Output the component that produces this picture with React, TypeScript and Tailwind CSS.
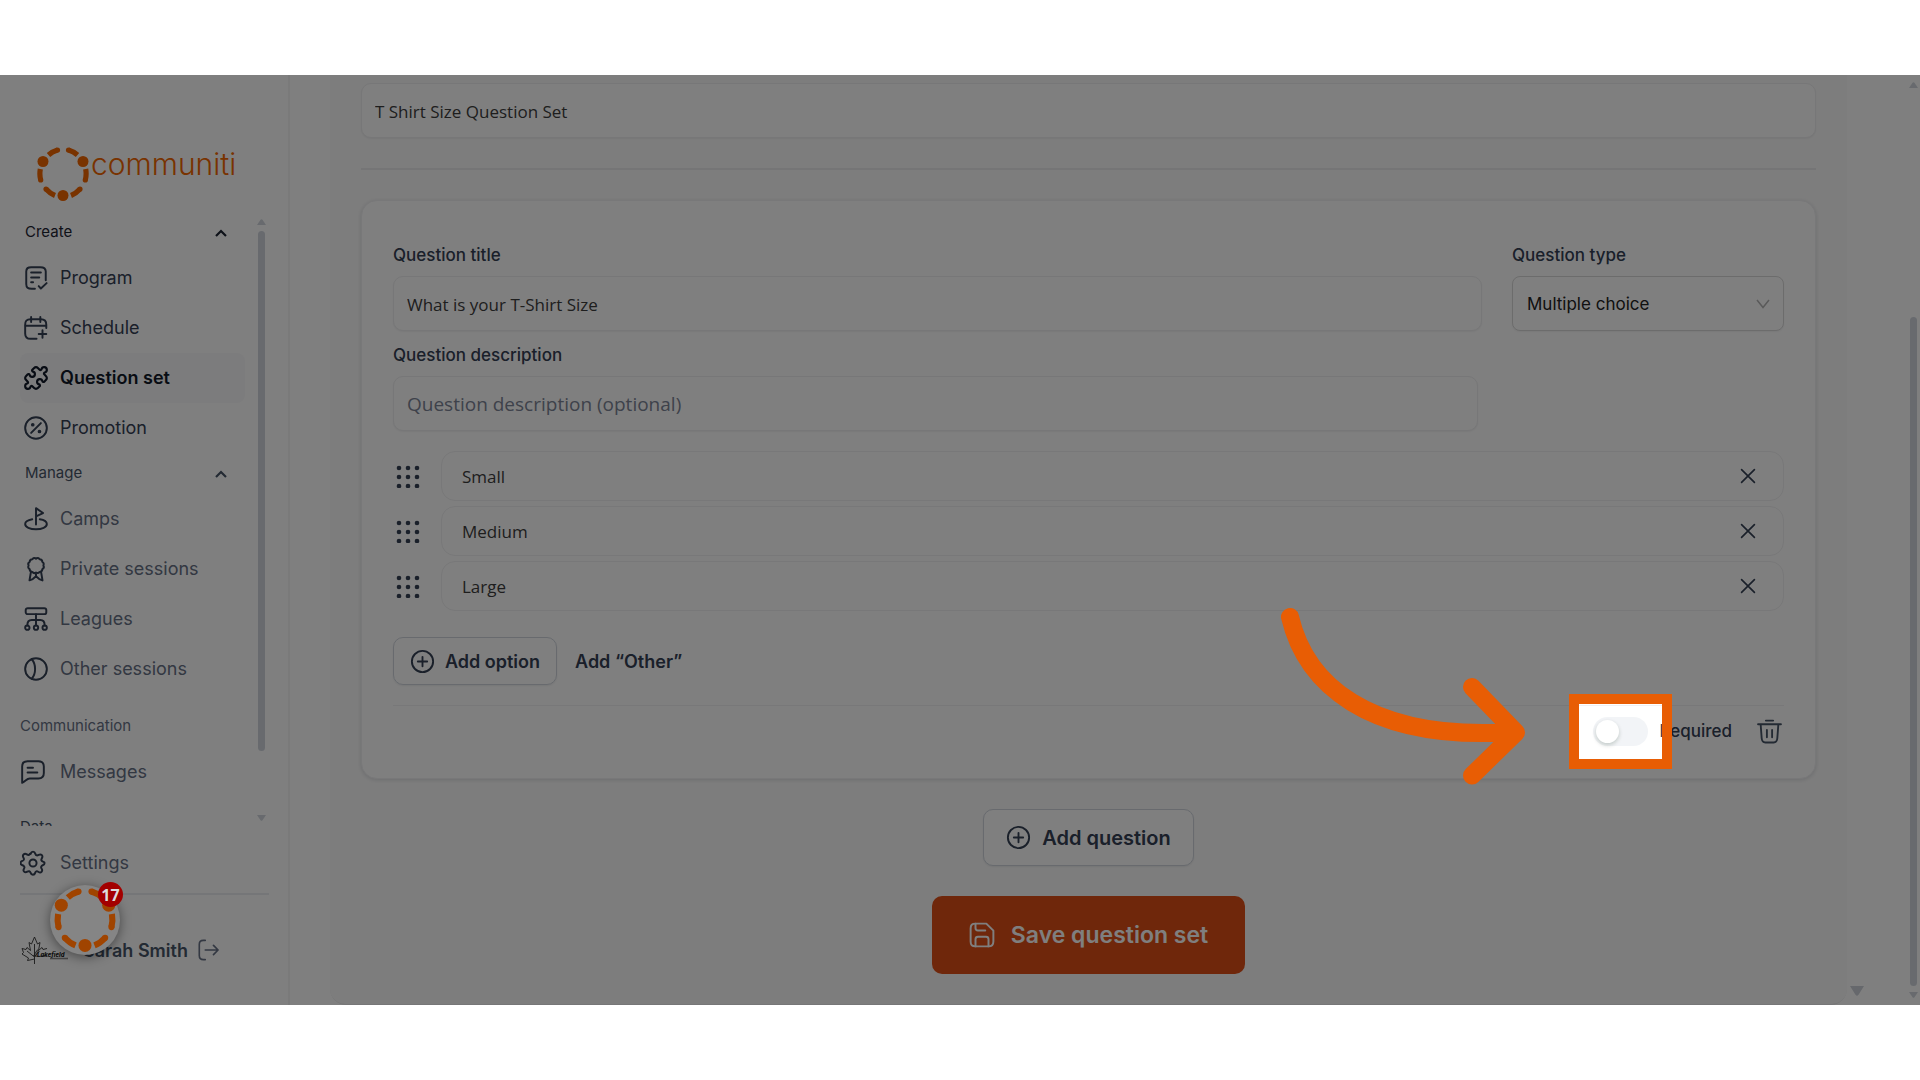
import { useState } from 'react';
import type { ReactNode } from 'react';
import { Puzzle } from 'lucide-react';

const iconProps = {
  fill: 'none',
  stroke: 'currentColor',
  strokeWidth: 1.8,
  strokeLinecap: 'round' as const,
  strokeLinejoin: 'round' as const,
  viewBox: '0 0 24 24',
};

function Icon({ children, className = 'size-[26px]' }: { children: ReactNode; className?: string }) {
  return (
    <svg {...iconProps} className={`shrink-0 ${className}`} aria-hidden="true">
      {children}
    </svg>
  );
}

const icons: Record<string, ReactNode> = {
  program: (
    <>
      <path d="M11 22H8c-3.500 0-5-1-5-4.500V6c0-3 1.500-4 4.500-4H16c3.500 0 5 1 5 4v8" />
      <path d="M7.500 7h9M7.500 11.500h7.500M7.500 16h1.800M14.500 19.500l2 2.200 5.300-5" />
    </>
  ),
  schedule: (
    <>
      <path d="M21.500 12V9c0-3.500-1.200-5-5-5H7C3.200 4 2 5.500 2 9v8c0 3.500 1.200 5 5 5h5.500" />
      <path d="M7.500 1.800v4.700M16 1.800v4.700M2.500 10h18.500M18 14v7M14.500 17.500h7" />
    </>
  ),
  promotion: (
    <>
      <circle cx="12" cy="12" r="10" />
      <path d="M7.500 16.500l9-9" />
      <circle cx="9" cy="9" r=".8" />
      <circle cx="15.200" cy="15.200" r=".8" />
    </>
  ),
  camps: (
    <>
      <path d="M12 17V2l6.500 4.500L12 9.500" />
      <path d="M8.500 12.300C4.700 13 2 14.600 2 16.700 2 19.600 6.500 21.500 12 21.500s10-1.900 10-4.800c0-2.100-2.700-3.800-6.500-4.400" />
    </>
  ),
  sessions: (
    <>
      <path d="M12 2.500c1.200-.9 2.500-.8 3.300.5 1.500 0 2.500.8 2.500 2.400 1.300.7 1.700 2 1 3.300.8 1.300.4 2.600-.9 3.400 0 1.600-1 2.500-2.500 2.600-.9 1.200-2.200 1.400-3.400.5-1.200.9-2.500.7-3.400-.5-1.500-.1-2.500-1-2.500-2.600-1.300-.8-1.700-2.100-.9-3.400-.7-1.300-.3-2.600 1-3.300 0-1.600 1-2.400 2.500-2.400.8-1.300 2.100-1.400 3.300-.5z" />
      <path d="M7.300 14.800L6 22.500l3-1.200 3-2.600 3 2.600 3 1.200-1.300-7.700M12 18.500v-2" />
    </>
  ),
  leagues: (
    <>
      <rect x="2.500" y="2" width="19" height="5.500" rx="1.800" />
      <circle cx="4" cy="20" r="2" />
      <circle cx="12" cy="20" r="2" />
      <circle cx="20" cy="20" r="2" />
      <path d="M12 7.500V18M4 18c0-3.500 1-5 4-5h8c3 0 4 1.500 4 5" />
    </>
  ),
  other: (
    <>
      <circle cx="12" cy="12" r="10" />
      <path d="M8 3c4.200 4.500 4.200 13.500 0 18" />
    </>
  ),
  messages: (
    <>
      <path d="M2 22V7c0-3.500 1.300-5 5-5h10c3.500 0 5 1.500 5 5v6c0 3.500-1.500 5-5 5H9c-3 0-4 3-7 4z" />
      <path d="M7 8h5M7 12.500h9" />
    </>
  ),
  settings: (
    <>
      <circle cx="12" cy="12" r="3.300" />
      <path d="M9.800 3.600C10.300 2 10.800 1.500 12 1.500s1.700.5 2.200 2.100 1.600 1.700 3 .9 2.200-.6 3 .3.700 1.700-.1 3-.4 2.400 1 2.900S22.700 11 22.700 12.100s-.4 1.600-1.700 2-2 1.700-1.100 3 .8 2.100 0 3-1.800.8-3.100 0-2.400-.4-2.800 1-.9 1.700-2.100 1.700-1.700-.4-2.200-1.900-1.600-1.700-2.900-.9-2.100.9-3 0-.9-1.600 0-3-.3-2.500-1.600-2.900-1.700-.9-1.700-2 .4-1.600 1.700-2 1.900-1.600 1-3-.8-2.100.1-3 1.700-.9 3-.1 2.300.8 2.800-.5z" />
    </>
  ),
  plus: (
    <>
      <circle cx="12" cy="12" r="10.200" />
      <path d="M12 7.500v9M7.500 12h9" />
    </>
  ),
  close: <path d="M5 5l14 14M19 5L5 19" />,
  trash: (
    <path d="M1 5h22M8.500 1.500h7M3.500 5l1 13.500c.2 3 1 4 3.500 4h8c2.500 0 3.300-1 3.500-4l1-13.500M9.500 10.500v7M14.500 10.500v7" />
  ),
  save: (
    <>
      <path d="M1.500 6c0-3.300 1.200-4.500 4.500-4.500h10L22.500 8v10c0 3.300-1.200 4.500-4.500 4.500H6c-3.300 0-4.500-1.200-4.500-4.500z" />
      <path d="M6 1.500V5.500c0 1.500.8 2.300 2.300 2.300H15M6 22.500V16c0-1.500.8-2.300 2.300-2.300h7.400c1.500 0 2.300.8 2.300 2.300v6.500" />
    </>
  ),
  logout: <path d="M9 1.500H7C3.700 1.500 2.500 2.700 2.500 6v12c0 3.300 1.200 4.500 4.500 4.500h2M9 12h14M18 7l5 5-5 5" />,
};

function LogoMark({ className }: { className: string }) {
  return (
    <svg viewBox="0 0 52 54" className={`shrink-0 ${className}`} fill="none" stroke="currentColor" strokeWidth="5.200" aria-hidden="true">
      <path d="M11.500 8Q15.500 4.500 20.500 3M31.500 3Q36.500 4.500 40.500 8M3.300 22Q2.300 28 3.700 33M48.700 22Q49.700 28 48.300 33M9 42Q13 46.500 18 48.500M43 42Q39 46.500 34 48.500" />
      <g fill="currentColor" stroke="none">
        <circle cx="6" cy="14.500" r="5.500" />
        <circle cx="46" cy="14.500" r="5.500" />
        <circle cx="26" cy="48.500" r="5.500" />
        <circle cx="20.500" cy="3" r="2.600" />
        <circle cx="31.500" cy="3" r="2.600" />
        <circle cx="3.700" cy="33" r="2.600" />
        <circle cx="48.300" cy="33" r="2.600" />
        <circle cx="9" cy="42" r="2.600" />
        <circle cx="43" cy="42" r="2.600" />
      </g>
    </svg>
  );
}

interface NavItemProps {
  icon: ReactNode;
  label: string;
  tone: string;
  active?: boolean;
  flush?: boolean;
}

function NavItem({ icon, label, tone, active, flush }: NavItemProps) {
  return (
    <a
      href="#"
      className={`flex h-[50px] items-center rounded-lg pb-px text-[18px] ${flush ? 'gap-[14px]' : 'gap-[11px] pl-[3px]'} ${
        active ? 'bg-[#f9f9fa] font-semibold text-[#101828]' : tone
      }`}
    >
      <span className={active ? 'text-[#101828]' : 'text-[#344054]'}>
        <Icon>{icon}</Icon>
      </span>
      {label}
    </a>
  );
}

function SectionHeader({ label, tone }: { label: string; tone: string }) {
  return (
    <button className={`flex h-[41px] w-full items-center justify-between pr-[18px] pl-[5px] text-[15px] ${tone}`}>
      {label}
      <svg viewBox="0 0 12 8" className="h-2 w-3" fill="none" stroke="currentColor" strokeWidth="2.200" aria-hidden="true">
        <path d="M1 7l5-5 5 5" />
      </svg>
    </button>
  );
}

function Scrollbar({ className, thumb }: { className: string; thumb: string }) {
  return (
    <div className={`flex flex-col items-center ${className}`} aria-hidden="true">
      <svg viewBox="0 0 9 6" className="h-[6px] w-[9px]" fill="currentColor">
        <path d="M0 6L3.500.8Q4.500-.4 5.500.8L9 6z" />
      </svg>
      <div className="flex w-[7px] grow flex-col py-[6px]">
        <div className={`w-full rounded-full bg-current ${thumb}`} />
      </div>
      <svg viewBox="0 0 9 6" className="h-[6px] w-[9px]" fill="currentColor">
        <path d="M0 0L3.500 5.200Q4.500 6.400 5.500 5.200L9 0z" />
      </svg>
    </div>
  );
}

function Sidebar() {
  return (
    <aside className="flex w-[290px] shrink-0 flex-col border-r-2 border-[#f4f4f5] pl-5">
      <div className="flex items-start pt-[72px] pl-[17px] text-[#f26600]">
        <LogoMark className="h-[54px] w-[52px]" />
        <span className="pl-[2px] text-[30px] leading-[35px] font-light">communiti</span>
      </div>

      <div className="mt-[11px] flex h-0 grow">
        <nav className="w-[225px] overflow-hidden">
          <SectionHeader label="Create" tone="text-[#1d2433]" />
          <NavItem icon={icons.program} label="Program" tone="text-[#344054]" />
          <NavItem icon={icons.schedule} label="Schedule" tone="text-[#344054]" />
          <NavItem icon={<Puzzle strokeWidth={2} />} label="Question set" tone="text-[#101828]" active />
          <NavItem icon={icons.promotion} label="Promotion" tone="text-[#344054]" />
          <SectionHeader label="Manage" tone="text-[#475467]" />
          <NavItem icon={icons.camps} label="Camps" tone="text-[#667085]" />
          <NavItem icon={icons.sessions} label="Private sessions" tone="text-[#667085]" />
          <NavItem icon={icons.leagues} label="Leagues" tone="text-[#667085]" />
          <NavItem icon={icons.other} label="Other sessions" tone="text-[#667085]" />
          <h2 className="mt-[12px] flex h-[41px] items-center text-[15px] text-[#667085]">Communication</h2>
          <NavItem icon={icons.messages} label="Messages" tone="text-[#667085]" flush />
          <h2 className="mt-[10px] flex h-[41px] items-center text-[15px] text-[#475467]">Data</h2>
        </nav>
        <Scrollbar className="ml-[12px] pt-[7px] pb-[5px] text-[#d0d5dd]" thumb="h-[90%]" />
      </div>

      <div className="mr-[19px] border-b-2 border-[#eaecf0] pt-[12px] pb-[5px]">
        <NavItem icon={icons.settings} label="Settings" tone="text-[#667085]" flush />
      </div>

      <div className="relative flex h-[110px] items-center text-[18px] font-semibold text-[#475467]">
        <svg viewBox="0 0 48 28" className="h-7 w-12" fill="none" stroke="#333" strokeWidth=".9" aria-hidden="true">
          <path d="M14.500 28V19M14.500 23l-7 1.500 1-2.500L2 18l1.500-1.500L2 12.500l4 1 1-2 3.500 3-1.500-8 2.500 1.500L14.500 1l3 7 2.500-1.500-1.500 8 3.500-3 1 2 4-1M14.500 21L7 15M14.500 19V8M14.500 21l5-6" />
          <path d="M13 20c2-1 4-7 5-6s-2 4-3 6q6 1 10-.5" />
          <text x="17" y="20.500" fill="#222" stroke="none" fontSize="6" fontStyle="italic" fontWeight="800">Lakefield</text>
          <path d="M30 22.500h18" stroke="#8c8c8c" strokeWidth="1.600" />
        </svg>
        <span className="pl-[15px]">Sarah Smith</span>
        <button aria-label="Log out" className="ml-[9px] text-[#667085]">
          <Icon className="size-[22px]">{icons.logout}</Icon>
        </button>

        {/* Floating help widget */}
        <button
          aria-label="17 notifications"
          className="absolute -top-[10px] left-[30px] z-20 flex size-[70px] items-center justify-center rounded-full bg-[#858585] text-[#a04400] shadow-[0_2px_12px_rgba(0,0,0,0.45)]"
        >
          <LogoMark className="size-[64px]" />
          <span className="absolute -top-[3px] -right-[3px] flex size-[25px] items-center justify-center rounded-full bg-[#a30000] font-['Open_Sans',sans-serif] text-[16px] font-bold text-[#dddddd]">
            17
          </span>
        </button>
      </div>
    </aside>
  );
}

const inputClass =
  'block h-[55px] w-full rounded-[10px] border border-[#eeeef0] bg-white px-[13px] pt-[2px] font-["Open_Sans",sans-serif] text-[17px] text-[#3c3c3c] shadow-[0_1px_2px_rgba(16,24,40,0.06)] outline-none';

const labelClass = 'block h-[43px] text-[17px] leading-[45px] font-medium text-[#344054]';

function OptionRow({ value, onRemove }: { value: string; onRemove: () => void }) {
  return (
    <li className="flex items-center">
      <svg viewBox="0 0 24 24" className="ml-[3px] size-6 text-[#344054]" fill="currentColor" aria-hidden="true">
        {[4, 13, 22].map((y) => [3, 12, 21].map((x) => <circle key={`${x}-${y}`} cx={x} cy={y} r="2.300" />))}
      </svg>
      <div className="ml-[21px] flex h-[50px] grow items-center rounded-[14px] border border-[#f0f0f2] pr-[24px] pl-[20px]">
        <input
          aria-label="Option"
          defaultValue={value}
          className="h-[38px] grow bg-transparent font-['Open_Sans',sans-serif] text-[17px] text-[#3c3c3c] outline-none"
        />
        <button aria-label={`Remove ${value}`} onClick={onRemove} className="text-[#344054]">
          <Icon className="size-[22px]">{icons.close}</Icon>
        </button>
      </div>
    </li>
  );
}

function RequiredToggle() {
  const [required, setRequired] = useState(false);
  return (
    <label className="flex items-center gap-[11px] text-[17px] font-medium text-[#344054]">
      <span className="relative flex">
        <input
          type="checkbox"
          role="switch"
          checked={required}
          onChange={(e) => setRequired(e.target.checked)}
          className="h-[29px] w-[55px] appearance-none rounded-full bg-[#f2f4f7] before:m-[3px] before:block before:size-[23px] before:rounded-full before:bg-white before:shadow-[0_2px_4px_rgba(0,35,11,0.2)] checked:bg-[#df4f16] checked:before:ml-[29px]"
        />
        {/* Spotlight: the spread shadow dims everything else in the frame */}
        <span className="pointer-events-none absolute -inset-x-[14px] -inset-y-[13px] z-10 shadow-[0_0_0_4000px_rgba(0,0,0,0.5)] outline-10 outline-[#e85d04]" />
        <svg
          viewBox="0 0 250 186"
          className="pointer-events-none absolute -top-[113px] -left-[313px] z-10 h-[186px] w-[250px] max-w-none"
          fill="none"
          stroke="#e85d04"
          strokeWidth="18"
          strokeLinecap="round"
          strokeLinejoin="round"
          aria-hidden="true"
        >
          <path d="M10 13C25 77 85 138 234 128M192 83L236 128.500L192 171.500" />
        </svg>
      </span>
      Required
    </label>
  );
}

function QuestionCard() {
  const [options, setOptions] = useState(['Small', 'Medium', 'Large']);

  return (
    <section className="rounded-2xl border border-[#f0f0f2] bg-white px-[31px] pt-[32px] shadow-[0_1px_4px_rgba(16,24,40,0.14)]">
      <div className="flex gap-[30px]">
        <div className="grow">
          <label htmlFor="question-title" className={labelClass}>Question title</label>
          <input id="question-title" defaultValue="What is your T-Shirt Size" className={inputClass} />
          <label htmlFor="question-description" className={`${labelClass} mt-[2px]`}>Question description</label>
          <div className="pr-1">
            <input
              id="question-description"
              placeholder="Question description (optional)"
              className={`${inputClass} placeholder:text-[19px] placeholder:text-[#7c8496]`}
            />
          </div>
        </div>
        <div className="w-[272px] shrink-0">
          <label htmlFor="question-type" className={labelClass}>Question type</label>
          <div className="relative">
            <select
              id="question-type"
              className="h-[55px] w-full appearance-none rounded-lg border border-[#d9d9d9] bg-white px-[14px] pt-[2px] text-[17px] text-[#222222] shadow-[0_1px_2px_rgba(16,24,40,0.06)]"
            >
              <option>Multiple choice</option>
            </select>
            <svg viewBox="0 0 14 10" className="pointer-events-none absolute top-[23px] right-[14px] h-[10px] w-[14px]" fill="none" stroke="#b4b4b4" strokeWidth="1.500" aria-hidden="true">
              <path d="M1 1l6 7.500L13 1" />
            </svg>
          </div>
        </div>
      </div>

      <ul className="mt-5 flex flex-col gap-[5px]">
        {options.map((option) => (
          <OptionRow key={option} value={option} onRemove={() => setOptions(options.filter((o) => o !== option))} />
        ))}
      </ul>

      <div className="mt-[26px] flex items-center gap-[18px] border-b border-[#f0f0f2] pb-5 text-[18px] font-semibold text-[#344054]">
        <button className="flex h-12 items-center gap-[10px] rounded-[10px] border border-[#d0d5dd] px-4 shadow-[0_1px_2px_rgba(16,24,40,0.08)]">
          <Icon className="size-[25px]">{icons.plus}</Icon>
          Add option
        </button>
        <button>Add “Other”</button>
      </div>

      <div className="flex h-[72px] items-start justify-end gap-[25px] pt-[11px]">
        <RequiredToggle />
        <button aria-label="Delete question" className="pt-[2px] pr-[2px] text-[#475467]">
          <Icon className="size-[25px]">{icons.trash}</Icon>
        </button>
      </div>
    </section>
  );
}

export default function App() {
  return (
    <div className="flex min-h-screen flex-col justify-center bg-white font-[Inter,sans-serif]">
      <div className="relative flex overflow-hidden bg-white">
        <Sidebar />

        <main className="flex grow pl-10">
          <div className="grow rounded-b-2xl border-b border-[#ededee] bg-[#fbfbfb] px-[31px] pt-2 pb-[30px]">
            <input aria-label="Question set name" defaultValue="T Shirt Size Question Set" className={inputClass} />
            <hr className="my-[30px] border-t-2 border-[#eaeaec]" />
            <QuestionCard />

            <div className="mt-[30px] flex flex-col items-center gap-[30px]">
              <button className="flex h-[57px] items-center gap-[11px] rounded-[10px] border border-[#d0d5dd] bg-white px-[22px] text-xl font-semibold text-[#344054] shadow-[0_1px_2px_rgba(16,24,40,0.08)]">
                <Icon className="size-[25px]">{icons.plus}</Icon>
                Add question
              </button>
              <button className="flex h-[78px] items-center gap-[16px] rounded-[10px] bg-[#df4f16] px-[37px] text-[23px] font-semibold text-white">
                <Icon className="size-[26px]">{icons.save}</Icon>
                Save question set
              </button>
            </div>
          </div>

          {/* Page scrollbars */}
          <div className="flex w-[73px] shrink-0 justify-between">
            <svg viewBox="0 0 14 10" className="mb-[9px] ml-[3px] h-[10px] w-[14px] self-end text-[#ccd0d8]" fill="currentColor" aria-hidden="true">
              <path d="M0 0L5.500 8.800Q7 10.500 8.500 8.800L14 0z" />
            </svg>
            <Scrollbar className="mr-[2px] py-[7px] text-[#d0d5dd]" thumb="mt-auto h-[75%]" />
          </div>
        </main>
      </div>
    </div>
  );
}
